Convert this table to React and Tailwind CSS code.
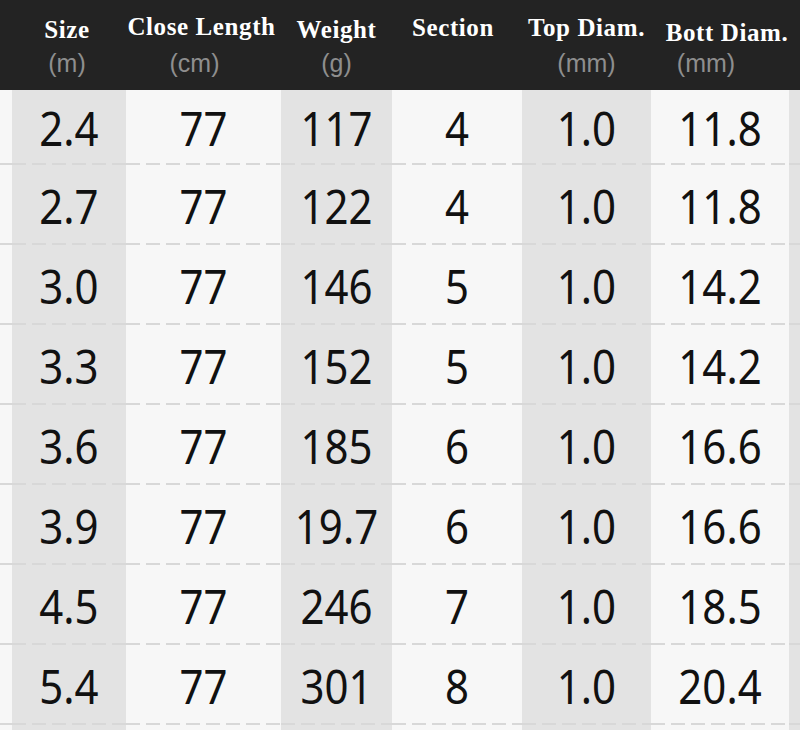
import React from 'react';

const cols = [
  { w: 'w-[12px]', bg: 'bg-[#f7f7f7]' },
  { w: 'w-[114px]', bg: 'bg-[#e3e3e3]', label: 'Size', unit: '(m)', lc: 'mt-[15px] -translate-x-[2px]', uc: '-translate-x-[2px]' },
  { w: 'w-[155px]', bg: 'bg-[#f7f7f7]', label: 'Close Length', unit: '(cm)', lc: 'mt-[12px] -translate-x-[2px]', uc: '-translate-x-[9px]' },
  { w: 'w-[111px]', bg: 'bg-[#e3e3e3]', label: 'Weight', unit: '(g)', lc: 'mt-[15px]', uc: '' },
  { w: 'w-[130px]', bg: 'bg-[#f7f7f7]', label: 'Section', unit: '', lc: 'mt-[13px] -translate-x-[4px]', uc: '' },
  { w: 'w-[129px]', bg: 'bg-[#e3e3e3]', label: 'Top Diam.', unit: '(mm)', lc: 'mt-[13px]', uc: '' },
  { w: 'w-[138px]', bg: 'bg-[#f7f7f7]', label: 'Bott Diam.', unit: '(mm)', lc: 'mt-[18px] translate-x-[7px]', uc: '-translate-x-[14px]' },
  { w: 'w-[11px]', bg: 'bg-[#e3e3e3]' },
];

const rows = [
  ['2.4', '77', '117', '4', '1.0', '11.8'],
  ['2.7', '77', '122', '4', '1.0', '11.8'],
  ['3.0', '77', '146', '5', '1.0', '14.2'],
  ['3.3', '77', '152', '5', '1.0', '14.2'],
  ['3.6', '77', '185', '6', '1.0', '16.6'],
  ['3.9', '77', '19.7', '6', '1.0', '16.6'],
  ['4.5', '77', '246', '7', '1.0', '18.5'],
  ['5.4', '77', '301', '8', '1.0', '20.4'],
];

const dash =
  'bg-[repeating-linear-gradient(90deg,#d8d8d8_0_14px,transparent_14px_20px)] bg-no-repeat bg-bottom bg-size-[100%_2px]';

function Header() {
  return (
    <div className="relative flex h-[90px] bg-[#232323]">
      {cols.map((c, i) => (
        <div key={i} className={`${c.w} shrink-0 flex flex-col items-center`}>
          {c.label && (
            <>
              <div
                className={`h-[30px] leading-[30px] whitespace-nowrap text-white font-bold text-[25px] tracking-[0.6px] ${c.lc}`}
                style={{ fontFamily: '"Liberation Serif", serif' }}
              >
                {c.label}
              </div>
              <div
                className={`absolute top-[48px] h-[30px] leading-[30px] whitespace-nowrap text-[#8e8e8e] text-[25px] ${c.uc}`}
                style={{ fontFamily: '"Liberation Sans", Arial, sans-serif' }}
              >
                {c.unit}
              </div>
            </>
          )}
        </div>
      ))}
    </div>
  );
}

function Row({ values, first }) {
  return (
    <div className={`flex ${first ? 'h-[75px]' : 'h-[80px]'}`}>
      {cols.map((c, i) => {
        const v = i > 0 && i < 7 ? values[i - 1] : null;
        return (
          <div
            key={i}
            className={`${c.w} ${c.bg} ${dash} shrink-0 flex items-center justify-center`}
          >
            {v && (
              <span
                className="inline-block text-[42px] leading-none text-[#111] scale-y-[1.12] mt-[1px]"
                style={{ fontFamily: '"Noto Sans", sans-serif' }}
              >
                {v}
              </span>
            )}
          </div>
        );
      })}
    </div>
  );
}

export default function App() {
  return (
    <div className="w-[800px] h-[730px] overflow-hidden bg-[#f7f7f7]">
      <Header />
      {rows.map((r, i) => (
        <Row key={i} values={r} first={i === 0} />
      ))}
      <div className="flex h-[10px]">
        {cols.map((c, i) => (
          <div key={i} className={`${c.w} ${c.bg} shrink-0`} />
        ))}
      </div>
    </div>
  );
}
